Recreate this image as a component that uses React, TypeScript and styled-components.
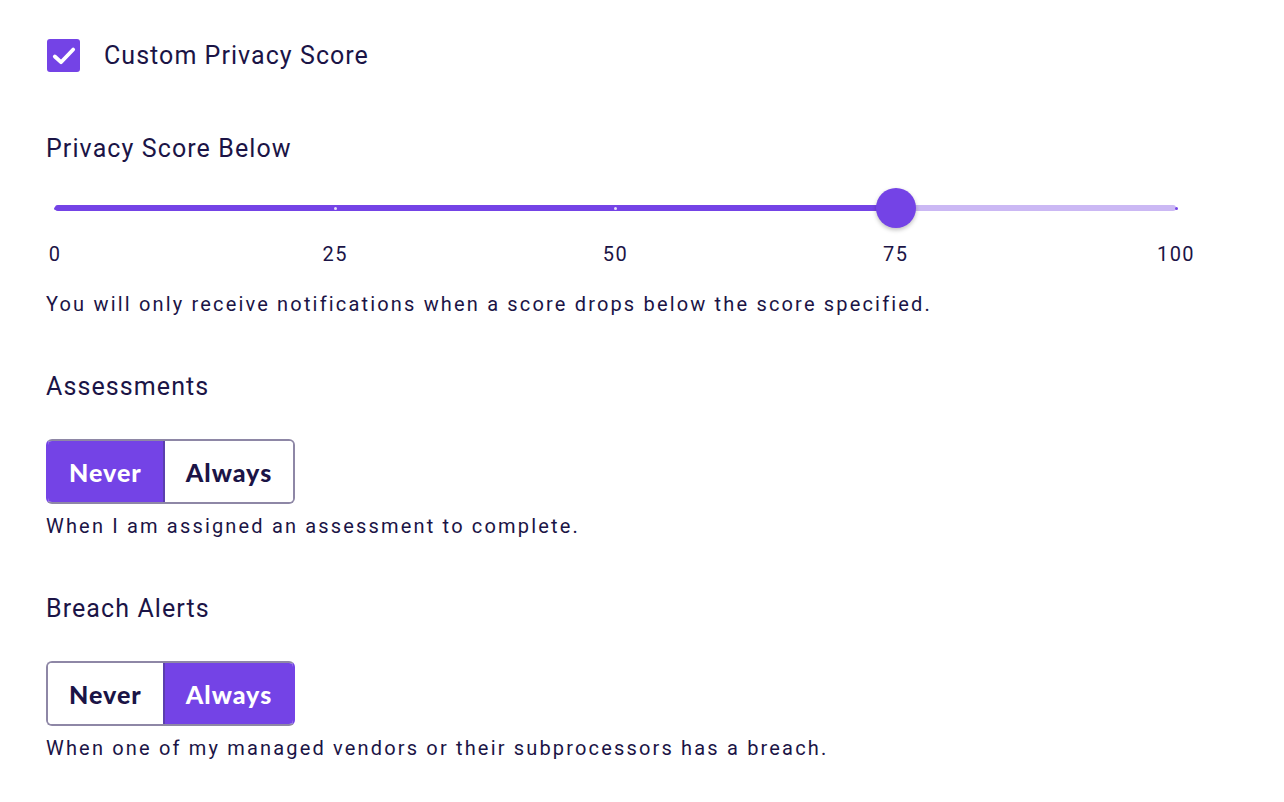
import React from "react";
import styled, { createGlobalStyle } from "styled-components";

const ink = "#1b1446";
const purple = "#7443e6";
const grey = "#8e87a6";

const Global = createGlobalStyle`
  body {
    margin: 0;
    background: #ffffff;
    font-family: Roboto, "Liberation Sans", sans-serif;
    color: ${ink};
  }
`;

const Page = styled.div`
  display: flex;
  flex-direction: column;
  gap: 55px;
  padding: 39px 0 0 46px;
  width: 1160px;
`;

const CheckRow = styled.label`
  display: flex;
  align-items: center;
  gap: 24px;
  margin-bottom: 7px;
  font-size: 25px;
  line-height: 33px;
  letter-spacing: 1.05px;
`;

const CheckBox = styled.span`
  width: 33px;
  height: 33px;
  border-radius: 3px;
  background: ${purple};
  display: flex;
  align-items: center;
  justify-content: center;
  margin-left: 1px;
`;

const Section = styled.section`
  display: flex;
  flex-direction: column;
  align-items: flex-start;
`;

const Heading = styled.h3`
  margin: 0;
  font-size: 25px;
  font-weight: 400;
  line-height: 30px;
  letter-spacing: 1.1px;
`;

const Note = styled.p`
  margin: 0;
  font-size: 20px;
  line-height: 26px;
  letter-spacing: 2.17px;
`;

const ScoreNote = styled(Note)`
  margin-top: 24px;
`;

const Slider = styled.div`
  position: relative;
  margin: 24px 0 0 9px;
  width: 1121px;
  height: 40px;
`;

const Track = styled.div`
  position: absolute;
  inset: 17px 0 auto 0;
  height: 6px;
  border-radius: 3px;
  background: #cbb8f4;
`;

const Fill = styled.div`
  position: absolute;
  left: 0;
  top: 17px;
  height: 6px;
  border-radius: 3px;
  background: ${purple};
`;

const Tick = styled.span<{ $on: boolean }>`
  position: absolute;
  top: 18.5px;
  width: 3px;
  height: 3px;
  margin-left: -1.5px;
  border-radius: 50%;
  background: ${(p) => (p.$on ? "#e6dcfb" : purple)};
`;

const Thumb = styled.span`
  position: absolute;
  top: 0;
  width: 40px;
  height: 40px;
  margin-left: -20px;
  border-radius: 50%;
  background: ${purple};
  box-shadow: 0 2px 4px rgba(0, 0, 0, 0.25);
`;

const Marks = styled.div`
  display: flex;
  justify-content: space-between;
  margin: 13px 0 0 9px;
  width: 1121px;
  font-size: 20px;
  line-height: 26px;
  letter-spacing: 1.5px;
`;

const Mark = styled.span`
  width: 0;
  display: flex;
  justify-content: center;
`;

const Toggle = styled.div<{ $on: boolean }>`
  display: flex;
  box-sizing: border-box;
  height: 65px;
  margin: 37px 0 9px;
  border-radius: 6px;
  overflow: hidden;
  border: 2px solid ${grey};
  ${(p) => (p.$on ? `border-right-color: ${purple};` : `border-left-color: ${purple};`)}
`;

const Segment = styled.button<{ $active: boolean }>`
  border: none;
  margin: 0;
  padding: 0 21px;
  font-family: Lato, "Noto Sans", sans-serif;
  font-weight: 900;
  font-size: 25px;
  letter-spacing: 1px;
  background: ${(p) => (p.$active ? purple : "#ffffff")};
  color: ${(p) => (p.$active ? "#ffffff" : ink)};
  & + & {
    border-left: 2px solid ${(p) => (p.$active ? purple : "#5b3fae")};
  }
`;

const marks = [0, 25, 50, 75, 100];
const value = 75;

function Option({ title, on, note }: { title: string; on: boolean; note: string }) {
  return (
    <Section>
      <Heading>{title}</Heading>
      <Toggle $on={on}>
        <Segment $active={!on}>Never</Segment>
        <Segment $active={on}>Always</Segment>
      </Toggle>
      <Note>{note}</Note>
    </Section>
  );
}

export default function App() {
  return (
    <>
      <Global />
      <Page>
        <CheckRow>
          <CheckBox>
            <svg width="24" height="20" viewBox="0 0 24 20">
              <path d="M2.8 10.5 L9 16.2 L21.2 3.5" fill="none" stroke="#fff" strokeWidth="3.8" strokeLinecap="round" strokeLinejoin="round" />
            </svg>
          </CheckBox>
          Custom Privacy Score
        </CheckRow>

        <Section>
          <Heading>Privacy Score Below</Heading>
          <Slider>
            <Track />
            <Fill style={{ width: `${value}%` }} />
            {marks.map((m) => (
              <Tick key={m} $on={m < value && m > 0} style={{ left: `${m}%` }} />
            ))}
            <Thumb style={{ left: `${value}%` }} />
          </Slider>
          <Marks>
            {marks.map((m) => (
              <Mark key={m}>{m}</Mark>
            ))}
          </Marks>
          <ScoreNote>You will only receive notifications when a score drops below the score specified.</ScoreNote>
        </Section>

        <Option title="Assessments" on={false} note="When I am assigned an assessment to complete." />
        <Option title="Breach Alerts" on={true} note="When one of my managed vendors or their subprocessors has a breach." />
      </Page>
    </>
  );
}
